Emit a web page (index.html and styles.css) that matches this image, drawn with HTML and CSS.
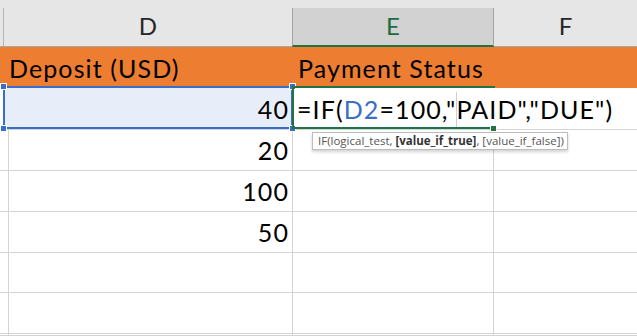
FILE: index.html
```html
<!DOCTYPE html>
<html>
<head>
<meta charset="utf-8">
<link rel="stylesheet" href="styles.css">
</head>
<body>
<div class="sheet">
  <div class="colhdr">
    <div class="hc corner"></div>
    <div class="hc">D</div>
    <div class="hc sel">E</div>
    <div class="hc last">F</div>
  </div>
  <div class="row title">
    <div class="c c0"></div>
    <div class="c">Deposit (USD)</div>
    <div class="c">Payment Status</div>
    <div class="c last"></div>
  </div>
  <div class="row">
    <div class="c c0"></div>
    <div class="c num hl">40</div>
    <div class="c edit"><span class="f">=IF(<span class="ref">D2</span>=100,"<span class="caret"></span>PAID","DUE")</span></div>
    <div class="c last"></div>
  </div>
  <div class="row">
    <div class="c c0"></div>
    <div class="c num">20</div>
    <div class="c"></div>
    <div class="c last"></div>
  </div>
  <div class="row">
    <div class="c c0"></div>
    <div class="c num">100</div>
    <div class="c"></div>
    <div class="c last"></div>
  </div>
  <div class="row">
    <div class="c c0"></div>
    <div class="c num">50</div>
    <div class="c"></div>
    <div class="c last"></div>
  </div>
  <div class="row">
    <div class="c c0"></div>
    <div class="c"></div>
    <div class="c"></div>
    <div class="c last"></div>
  </div>
  <div class="row">
    <div class="c c0"></div>
    <div class="c"></div>
    <div class="c"></div>
    <div class="c last"></div>
  </div>
  <div class="row stub">
    <div class="c c0"></div>
    <div class="c"></div>
    <div class="c"></div>
    <div class="c last"></div>
  </div>

  <div class="selbox">
    <span class="h tl"></span><span class="h tr"></span><span class="h bl"></span><span class="h br"></span>
  </div>
  <div class="editbox"><span class="fill"></span></div>
  <div class="tip">IF(logical_test, <b>[value_if_true]</b>, [value_if_false])</div>
</div>
</body>
</html>
```
FILE: styles.css
```css
* { box-sizing: border-box; }
html, body { margin: 0; padding: 0; background: #fff; }
body { width: 637px; height: 336px; overflow: hidden; }

.sheet {
  position: relative;
  height: 336px;
  overflow: hidden;
  font-family: Lato, "Open Sans", sans-serif;
  color: #000;
}

.colhdr, .row {
  display: grid;
  grid-template-columns: 4px 289px 201px 1fr;
}

.colhdr {
  background: #e6e6e6;
  padding-top: 8px;
  height: 47px;
}
.hc {
  border-right: 1px solid #bcbcbc;
  border-bottom: 1px solid #a8a8a8;
  font-size: 24px;
  line-height: 36px;
  text-align: center;
  color: #262626;
}
.hc.corner { border-right-color: #b4b4b4; }
.hc.sel {
  background: #d2d2d2;
  color: #1e6b40;
  border-left: 1px solid #a3a3a3;
  border-right: 1px solid #a3a3a3;
  border-bottom: 2px solid #217346;
  margin-left: -1px;
}
.hc.last { border-right: none; }

.row { height: 41px; }
.row.stub { height: 2px; overflow: hidden; }
.c {
  border-right: 1px solid #d4d4d4;
  border-bottom: 1px solid #d4d4d4;
  font-size: 25px;
  letter-spacing: 1.1px;
  line-height: 40px;
  padding: 1px 3px 0 5px;
  white-space: nowrap;
}
.c.last { border-right: none; }
.num { text-align: right; }
.hl { background: #e7eef9; }

.title { background: #ed7d31; }
.title .c { border-color: transparent; }

.edit { border-right-color: transparent; overflow: visible; position: relative; z-index: 2; padding-left: 4px; }
.ref { color: #3b6fc7; }
.caret {
  display: inline-block;
  width: 1px;
  height: 36px;
  margin-right: -1px;
  background: #cfcfcf;
  vertical-align: -9px;
}

.selbox {
  position: absolute;
  left: 3px;
  top: 86px;
  width: 290px;
  height: 43px;
  border: 2px solid #3a6dc5;
  z-index: 3;
}
.h {
  position: absolute;
  width: 7px;
  height: 7px;
  background: #3a6dc5;
  border: 1px solid #fff;
}
.h.tl { left: -5px; top: -5px; }
.h.tr { right: -5px; top: -5px; }
.h.bl { left: -5px; bottom: -5px; }
.h.br { right: -5px; bottom: -5px; }

.editbox {
  position: absolute;
  left: 292px;
  top: 86px;
  width: 203px;
  height: 43px;
  border-top: 2px solid #217346;
  border-left: 2px solid #217346;
  border-bottom: 2px solid #217346;
  z-index: 3;
}
.fill {
  position: absolute;
  right: -2px;
  bottom: -5px;
  width: 7px;
  height: 7px;
  background: #217346;
  border: 1px solid #fff;
}

.tip {
  position: absolute;
  left: 312px;
  top: 132px;
  width: 256px;
  height: 18px;
  background: #fff;
  border: 1px solid #bdbdbd;
  box-shadow: 0 2px 3px rgba(0,0,0,0.18);
  font-family: "Open Sans", sans-serif;
  font-size: 11.5px;
  line-height: 16px;
  padding-left: 5px;
  color: #555;
  white-space: nowrap;
  z-index: 4;
}
.tip b { color: #333; font-weight: 700; }
```
